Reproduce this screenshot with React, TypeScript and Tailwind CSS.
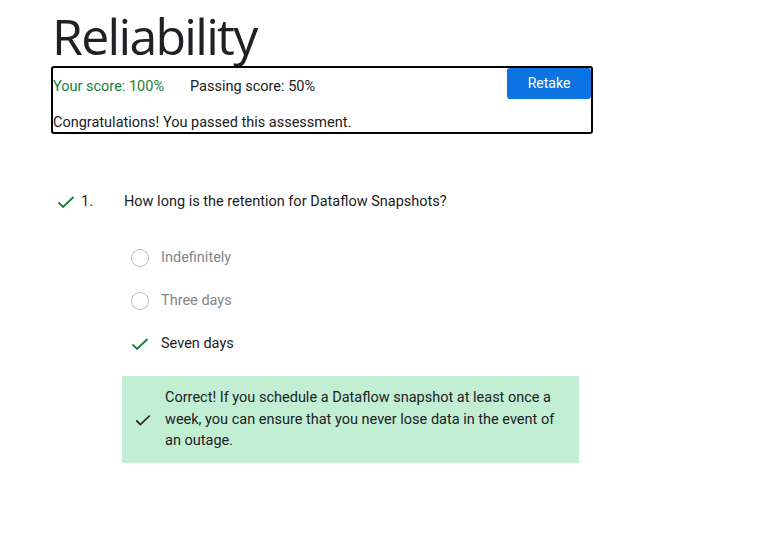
import React from 'react';

const options = [
  { label: 'Indefinitely', chosen: false },
  { label: 'Three days', chosen: false },
  { label: 'Seven days', chosen: true },
];

function Check({ className }: { className?: string }) {
  return (
    <svg viewBox="0 0 24 24" className={className} fill="none" stroke="currentColor" strokeWidth={2.3}>
      <path d="M3 12.5l5.5 5.5L21 6" />
    </svg>
  );
}

export default function App() {
  return (
    <div className="w-[764px] h-[537px] bg-white text-[#202124] font-['Roboto',sans-serif] pl-[51px]">
      <h1 className="h-[66px] font-['Open_Sans',sans-serif] text-[50px] leading-[72px] tracking-[-1.7px] text-[#202124] pl-px">
        Reliability
      </h1>
      <div className="w-[542px] h-[68px] border-2 border-black rounded-[3px] relative">
        <div className="flex text-[14.5px] leading-[36px] pt-px">
          <span className="text-[#188038]">Your score: 100%</span>
          <span className="ml-[26px] text-[#202124]">Passing score: 50%</span>
        </div>
        <div className="text-[14.5px] leading-[20px] mt-[8px]">Congratulations! You passed this assessment.</div>
        <button className="absolute right-0 top-0 w-[84px] h-[31px] bg-[#0b73e2] text-white text-[14px] rounded-[3px]">
          Retake
        </button>
      </div>

      <div className="mt-[58px] flex items-center h-[20px] text-[14.5px]">
        <Check className="w-[20px] h-[20px] text-[#188038] ml-[5px]" />
        <span className="ml-[5px] w-[43px]">1.</span>
        <span>How long is the retention for Dataflow Snapshots?</span>
      </div>

      <div className="ml-[79px] mt-[36px] flex flex-col gap-[23px]">
        {options.map((o) => (
          <div key={o.label} className="flex items-center h-[20px] text-[14.5px]">
            {o.chosen ? (
              <Check className="w-[20px] h-[20px] text-[#188038] mr-[11px]" />
            ) : (
              <span className="w-[18px] h-[18px] rounded-full border-[1.5px] border-[#bdbdbd] ml-px mr-[12px]" />
            )}
            <span className={o.chosen ? 'text-[#202124]' : 'text-[#80868b]'}>{o.label}</span>
          </div>
        ))}
      </div>

      <div className="ml-[71px] mt-[22px] w-[457px] h-[87px] bg-[#c2efd3] flex items-center">
        <Check className="w-[18px] h-[18px] text-[#202124] ml-[12px] shrink-0" />
        <p className="ml-[13px] w-[400px] text-[14.5px] leading-[21.5px] text-[#202124]">
          Correct! If you schedule a Dataflow snapshot at least once a week, you can ensure that you never lose data in the event of an outage.
        </p>
      </div>
    </div>
  );
}
